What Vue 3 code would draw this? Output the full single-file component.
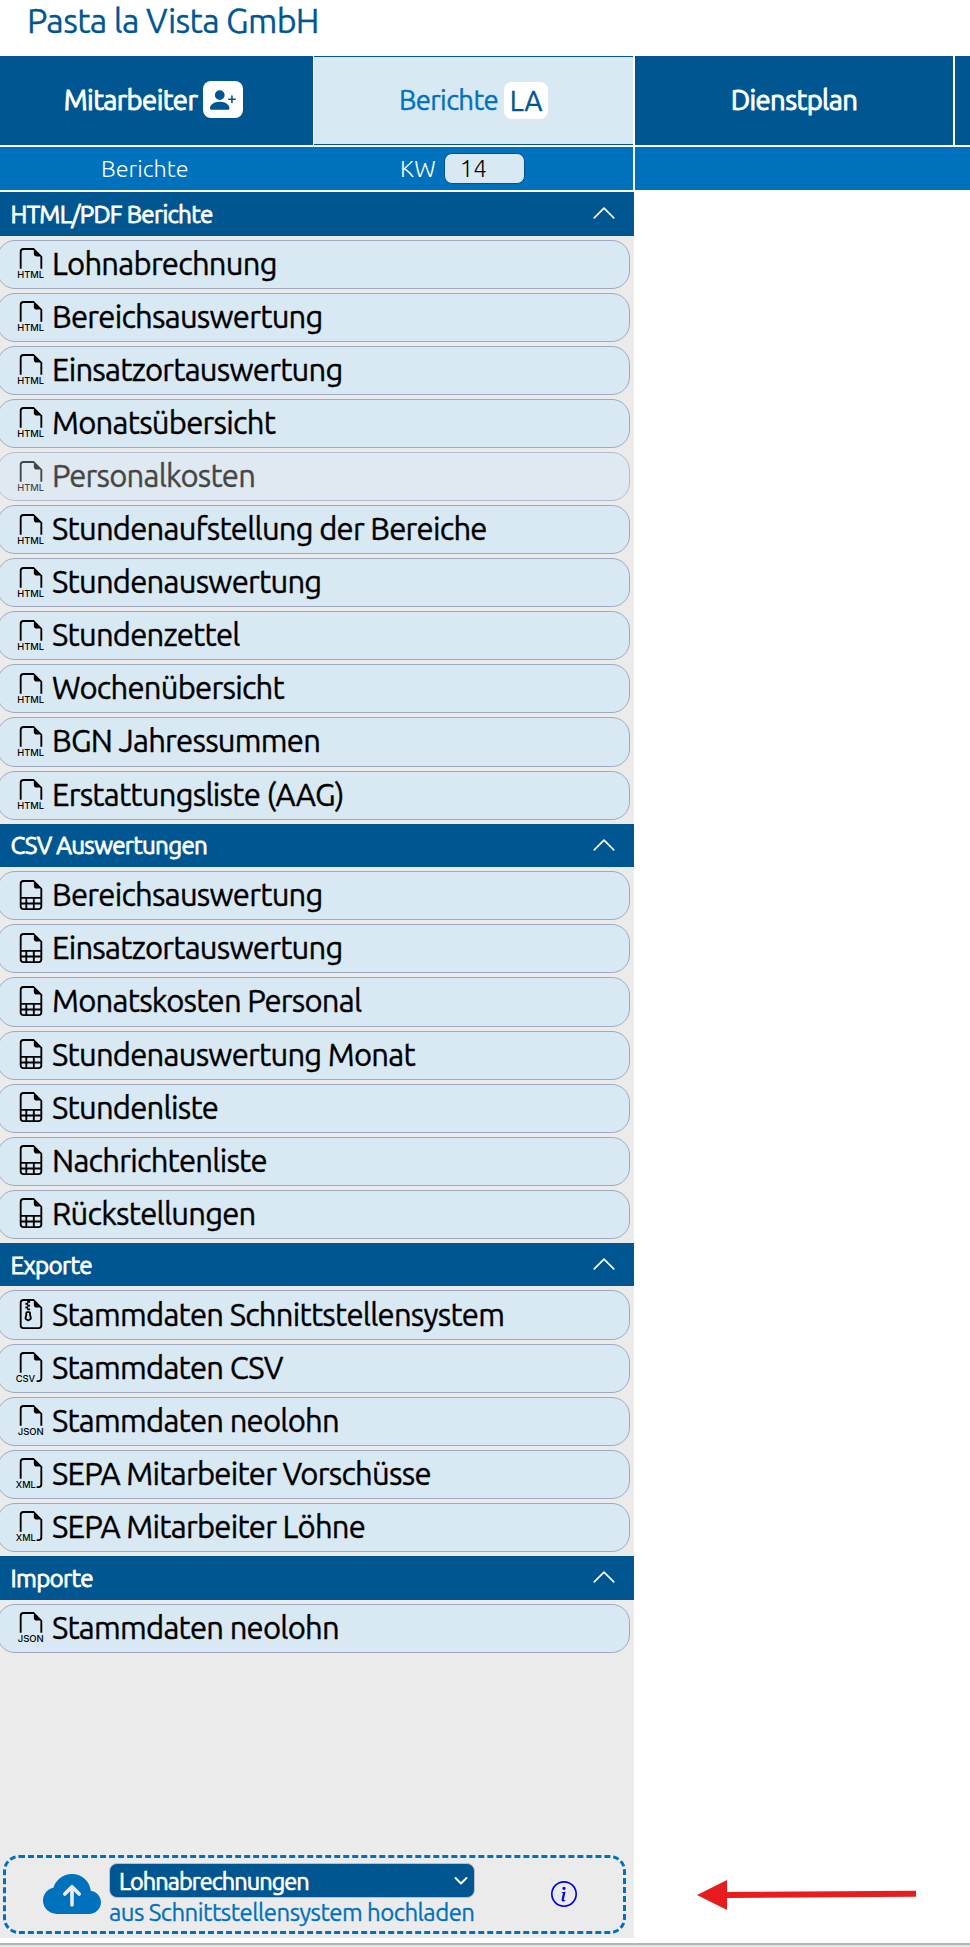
<script setup>
import { ref } from 'vue';

const week = ref('14');
const uploadType = ref('Lohnabrechnungen');

// Icon outlines, 16x16 grid
const icons = {
  open: 'M14 4.5V11h-1V4.5h-2A1.5 1.5 0 0 1 9.5 3V1H4a1 1 0 0 0-1 1v9H2V2a2 2 0 0 1 2-2h5.5z',
  tail: 'M14 4.5V14a2 2 0 0 1-2 2h-1v-1h1a1 1 0 0 0 1-1V4.5h-2A1.5 1.5 0 0 1 9.5 3V1H4a1 1 0 0 0-1 1v9H2V2a2 2 0 0 1 2-2h5.5z',
  sheet:
    'M14 14V4.5L9.5 0H4a2 2 0 0 0-2 2v12a2 2 0 0 0 2 2h8a2 2 0 0 0 2-2M9.5 3A1.5 1.5 0 0 0 11 4.5h2V9H3V2a1 1 0 0 1 1-1h5.5zM3 12v-2h2v2zm0 1h2v2H4a1 1 0 0 1-1-1zm3 2v-2h3v2zm4 0v-2h3v1a1 1 0 0 1-1 1zm3-3h-3v-2h3zm-7 0v-2h3v2z',
  zip: 'M5 7.5a1 1 0 0 1 1-1h1a1 1 0 0 1 1 1v.938l.4 1.599a1 1 0 0 1-.416 1.074l-.93.62a1 1 0 0 1-1.11 0l-.929-.62a1 1 0 0 1-.415-1.074L5 8.438zm2 0H6v.938a1 1 0 0 1-.03.243l-.4 1.598.93.62.929-.62-.4-1.598A1 1 0 0 1 7 8.438z M14 4.5V14a2 2 0 0 1-2 2H4a2 2 0 0 1-2-2V2a2 2 0 0 1 2-2h5.5zm-3 0A1.5 1.5 0 0 1 9.5 3V1h-2v1h-1v1h1v1h-1v1h1v1H6V5H5V4h1V3H5V2h1V1H4a1 1 0 0 0-1 1v12a1 1 0 0 0 1 1h8a1 1 0 0 0 1-1V4.5z',
};

const types = {
  html: { path: icons.open, tag: 'HTML', x: 0.7, width: 14.3 },
  sheet: { path: icons.sheet },
  zip: { path: icons.zip },
  csv: { path: icons.tail, tag: 'CSV', x: -0.2, width: 10.4 },
  json: { path: icons.open, tag: 'JSON', x: 0.9, width: 13.9 },
  xml: { path: icons.tail, tag: 'XML', x: -0.1, width: 10.6 },
};

const sections = ref([
  {
    title: 'HTML/PDF Berichte',
    open: true,
    items: [
      { type: 'html', label: 'Lohnabrechnung' },
      { type: 'html', label: 'Bereichsauswertung' },
      { type: 'html', label: 'Einsatzortauswertung' },
      { type: 'html', label: 'Monatsübersicht' },
      { type: 'html', label: 'Personalkosten', disabled: true },
      { type: 'html', label: 'Stundenaufstellung der Bereiche' },
      { type: 'html', label: 'Stundenauswertung' },
      { type: 'html', label: 'Stundenzettel' },
      { type: 'html', label: 'Wochenübersicht' },
      { type: 'html', label: 'BGN Jahressummen' },
      { type: 'html', label: 'Erstattungsliste (AAG)' },
    ],
  },
  {
    title: 'CSV Auswertungen',
    open: true,
    items: [
      { type: 'sheet', label: 'Bereichsauswertung' },
      { type: 'sheet', label: 'Einsatzortauswertung' },
      { type: 'sheet', label: 'Monatskosten Personal' },
      { type: 'sheet', label: 'Stundenauswertung Monat' },
      { type: 'sheet', label: 'Stundenliste' },
      { type: 'sheet', label: 'Nachrichtenliste' },
      { type: 'sheet', label: 'Rückstellungen' },
    ],
  },
  {
    title: 'Exporte',
    open: true,
    items: [
      { type: 'zip', label: 'Stammdaten Schnittstellensystem' },
      { type: 'csv', label: 'Stammdaten CSV' },
      { type: 'json', label: 'Stammdaten neolohn' },
      { type: 'xml', label: 'SEPA Mitarbeiter Vorschüsse' },
      { type: 'xml', label: 'SEPA Mitarbeiter Löhne' },
    ],
  },
  {
    title: 'Importe',
    open: true,
    items: [{ type: 'json', label: 'Stammdaten neolohn' }],
  },
]);
</script>

<template>
  <div class="app">
    <header class="company">Pasta la Vista GmbH</header>

    <nav class="tabs">
      <div class="tab tab-staff">
        <span class="tab-label">Mitarbeiter</span>
        <span class="badge badge-icon">
          <svg viewBox="0 0 16 16" fill="currentColor">
            <path
              d="M1 14s-1 0-1-1 1-4 6-4 6 3 6 4-1 1-1 1zm5-6a3 3 0 1 0 0-6 3 3 0 0 0 0 6"
            />
            <path
              d="M13.5 5a.5.5 0 0 1 .5.5V7h1.5a.5.5 0 0 1 0 1H14v1.5a.5.5 0 0 1-1 0V8h-1.5a.5.5 0 0 1 0-1H13V5.5a.5.5 0 0 1 .5-.5"
            />
          </svg>
        </span>
      </div>
      <div class="tab tab-active">
        <span class="tab-label">Berichte</span>
        <span class="badge">LA</span>
      </div>
      <div class="tab tab-plan"><span class="tab-label">Dienstplan</span></div>
      <div class="tab tab-rest"></div>
    </nav>

    <div class="subnav">
      <div class="subnav-left">
        <span class="sub-label">Berichte</span>
        <label class="week">
          <span>KW</span>
          <input v-model="week" type="text" />
        </label>
      </div>
      <div class="subnav-right"></div>
    </div>

    <div class="body">
      <aside class="sidebar">
        <section v-for="section in sections" :key="section.title">
          <h2 class="section-head" @click="section.open = !section.open">
            <span>{{ section.title }}</span>
            <svg class="chevron" :class="{ closed: !section.open }" viewBox="0 0 16 16">
              <path d="M2 11 8 5l6 6" />
            </svg>
          </h2>
          <ul v-if="section.open" class="items">
            <li
              v-for="item in section.items"
              :key="item.label"
              class="item"
              :class="{ disabled: item.disabled }"
            >
              <svg class="file-icon" viewBox="0 0 16 16">
                <path :d="types[item.type].path" fill-rule="evenodd" />
                <text
                  v-if="types[item.type].tag"
                  :x="types[item.type].x"
                  y="15.85"
                  :textLength="types[item.type].width"
                  lengthAdjust="spacingAndGlyphs"
                >
                  {{ types[item.type].tag }}
                </text>
              </svg>
              <span class="item-label">{{ item.label }}</span>
            </li>
          </ul>
        </section>

        <div class="upload">
          <svg class="cloud" viewBox="0 2 16 11">
            <path
              d="M8 2a5.53 5.53 0 0 0-3.594 1.342c-.766.66-1.321 1.52-1.464 2.383C1.266 6.095 0 7.555 0 9.318 0 11.366 1.708 13 3.781 13h8.906C14.502 13 16 11.57 16 9.773c0-1.636-1.242-2.969-2.834-3.194C12.923 3.999 10.69 2 8 2m2.354 5.146a.5.5 0 0 1-.708.708L8.5 6.707V10.5a.5.5 0 0 1-1 0V6.707L6.354 7.854a.5.5 0 1 1-.708-.708l2-2a.5.5 0 0 1 .708 0z"
            />
          </svg>
          <div class="upload-text">
            <div class="select">
              <span>{{ uploadType }}</span>
              <svg viewBox="0 0 16 16"><path d="m2.5 5 5.5 5.5L13.5 5" /></svg>
            </div>
            <div class="upload-hint">aus Schnittstellensystem hochladen</div>
          </div>
          <svg class="info" viewBox="0 0 16 16">
            <path d="M8 15A7 7 0 1 1 8 1a7 7 0 0 1 0 14m0 1A8 8 0 1 0 8 0a8 8 0 0 0 0 16" />
            <path
              d="m8.93 6.588-2.29.287-.082.38.45.083c.294.07.352.176.288.469l-.738 3.468c-.194.897.105 1.319.808 1.319.545 0 1.178-.252 1.465-.598l.088-.416c-.2.176-.492.246-.686.246-.275 0-.375-.193-.304-.533zM9 4.5a1 1 0 1 1-2 0 1 1 0 0 1 2 0"
            />
          </svg>
        </div>
      </aside>

      <main class="content">
        <svg class="arrow" viewBox="0 0 220 30">
          <path d="M0 15 30 0v12l189-1.2v6L30 18v12z" />
        </svg>
      </main>
    </div>

    <footer class="bottom"></footer>
  </div>
</template>

<style>
body {
  margin: 0;
  background: #fff;
}
</style>

<style scoped>
.app {
  --dark: #005691;
  --blue: #0071bd;
  --light: #d9e9f4;
  box-sizing: border-box;
  height: 1947px;
  display: flex;
  flex-direction: column;
  overflow: hidden;
  font-family: Ubuntu, 'Noto Sans', sans-serif;
  color: #000;
}
.company {
  flex: none;
  height: 56px;
  padding-left: 27px;
  font-size: 34px;
  line-height: 40px;
  letter-spacing: -0.68px;
  color: var(--dark);
  -webkit-text-stroke: 0.3px currentColor;
}
.tabs {
  flex: none;
  display: flex;
  height: 89px;
}
.tab {
  box-sizing: border-box;
  display: flex;
  align-items: center;
  justify-content: center;
  gap: 6px;
  background: var(--dark);
  color: #fff;
  font-size: 27.5px;
}
.tab-label {
  letter-spacing: -0.62px;
  line-height: 36px;
  margin-top: -2px;
  -webkit-text-stroke: 0.9px currentColor;
}
.tab-staff {
  width: 313px;
  margin-right: 1px;
  padding-right: 6px;
}
.tab-active {
  width: 319px;
  margin-right: 2px;
  background: var(--light);
  border: solid var(--dark);
  border-width: 1px 0;
  color: var(--blue);
}
.tab-active .tab-label {
  -webkit-text-stroke: 0.4px currentColor;
}
.tab-plan {
  width: 318px;
  margin-right: 2px;
}
.tab-rest {
  flex: 1;
}
.badge {
  display: flex;
  align-items: center;
  justify-content: center;
  width: 44px;
  height: 37px;
  border-radius: 8px;
  background: #fff;
  color: var(--dark);
  line-height: 36px;
  -webkit-text-stroke: 0.4px currentColor;
}
.badge-icon {
  width: 40px;
  margin-top: -2px;
}
.badge svg {
  width: 26px;
  height: 26px;
}
.subnav {
  flex: none;
  display: flex;
  gap: 2px;
  height: 43px;
  margin: 2px 0;
  color: #fff;
  font-size: 23.4px;
  line-height: 30px;
  font-weight: 300;
}
.subnav-left {
  width: 633px;
  display: flex;
  align-items: center;
  background: var(--blue);
}
.sub-label {
  width: 299px;
  margin-top: -2px;
  padding-left: 101px;
}
.subnav-right {
  flex: 1;
  background: var(--blue);
}
.week {
  display: flex;
  align-items: center;
  gap: 8px;
}
.week span {
  margin-top: -2px;
}
.week input {
  box-sizing: border-box;
  width: 81px;
  height: 31px;
  padding: 0 15px 1px;
  border: 1px solid var(--dark);
  border-radius: 8px;
  background: var(--light);
  font: inherit;
  font-size: 24px;
  color: #000;
}
.body {
  flex: none;
  display: flex;
  height: 1746px;
}
.sidebar {
  width: 634px;
  display: flex;
  flex-direction: column;
  background: #ebebeb;
}
.section-head {
  box-sizing: border-box;
  display: flex;
  align-items: center;
  justify-content: space-between;
  height: 43.6px;
  margin: 0;
  padding: 0 17px 0 10.5px;
  background: var(--dark);
  color: #fff;
  font-size: 24.2px;
  line-height: 42px;
  font-weight: 400;
  letter-spacing: -0.72px;
  -webkit-text-stroke: 0.8px currentColor;
}
.chevron {
  width: 26px;
  height: 26px;
  margin-top: -1px;
  fill: none;
  stroke: #fff;
  stroke-width: 1;
  stroke-linecap: round;
  stroke-linejoin: round;
}
.chevron.closed {
  transform: rotate(180deg);
}
.items {
  display: flex;
  flex-direction: column;
  gap: 4px;
  margin: 0;
  padding: 4px 4px 4px 0;
  list-style: none;
}
.item {
  box-sizing: border-box;
  display: flex;
  align-items: center;
  gap: 6px;
  height: 49.1px;
  margin-left: -3px;
  padding-left: 18px;
  border: 1px solid #9fa9bf;
  border-radius: 18px;
  background: var(--light);
}
.item.disabled {
  opacity: 0.7;
}
.file-icon {
  flex: none;
  width: 30px;
  height: 30px;
  margin-top: -2px;
  overflow: visible;
}
.file-icon text {
  font-family: Inter, sans-serif;
  font-size: 5px;
  font-weight: 500;
}
.item-label {
  margin-top: -1px;
  font-size: 31px;
  line-height: 44px;
  letter-spacing: -0.75px;
  white-space: nowrap;
  -webkit-text-stroke: 0.4px currentColor;
}
.upload {
  box-sizing: border-box;
  display: flex;
  align-items: center;
  height: 79px;
  margin: auto 8px 4px 3px;
  padding-left: 37px;
  border: 3px dashed var(--blue);
  border-radius: 16px;
}
.cloud {
  width: 58px;
  height: 40px;
  margin-top: -2px;
  fill: var(--blue);
}
.upload-text {
  width: 366px;
  margin: 2px 76px 0 8px;
}
.select {
  box-sizing: border-box;
  display: flex;
  align-items: center;
  justify-content: space-between;
  height: 35px;
  padding: 0 5px 0 9px;
  border: 1px solid #b8c0c8;
  border-radius: 8px;
  background: var(--dark);
  color: #fff;
  font-size: 23.5px;
  letter-spacing: -0.93px;
  -webkit-text-stroke: 0.7px currentColor;
}
.select svg {
  width: 16px;
  height: 16px;
  fill: none;
  stroke: #fff;
  stroke-width: 2;
  stroke-linecap: round;
  stroke-linejoin: round;
}
.upload-hint {
  height: 30px;
  font-size: 24px;
  line-height: 30px;
  letter-spacing: -0.54px;
  white-space: nowrap;
  color: var(--blue);
  -webkit-text-stroke: 0.3px currentColor;
}
.info {
  width: 26px;
  height: 26px;
  margin-top: -2px;
  fill: #0000ee;
}
.content {
  flex: 1;
  display: flex;
  align-items: flex-end;
}
.arrow {
  width: 220px;
  height: 30px;
  margin: 0 0 28px 63px;
  fill: #e81c1c;
}
.bottom {
  flex: none;
  height: 2px;
  margin-top: 5px;
  border-top: 2px solid #b0b5b5;
  background: #dde5e5;
}
</style>
